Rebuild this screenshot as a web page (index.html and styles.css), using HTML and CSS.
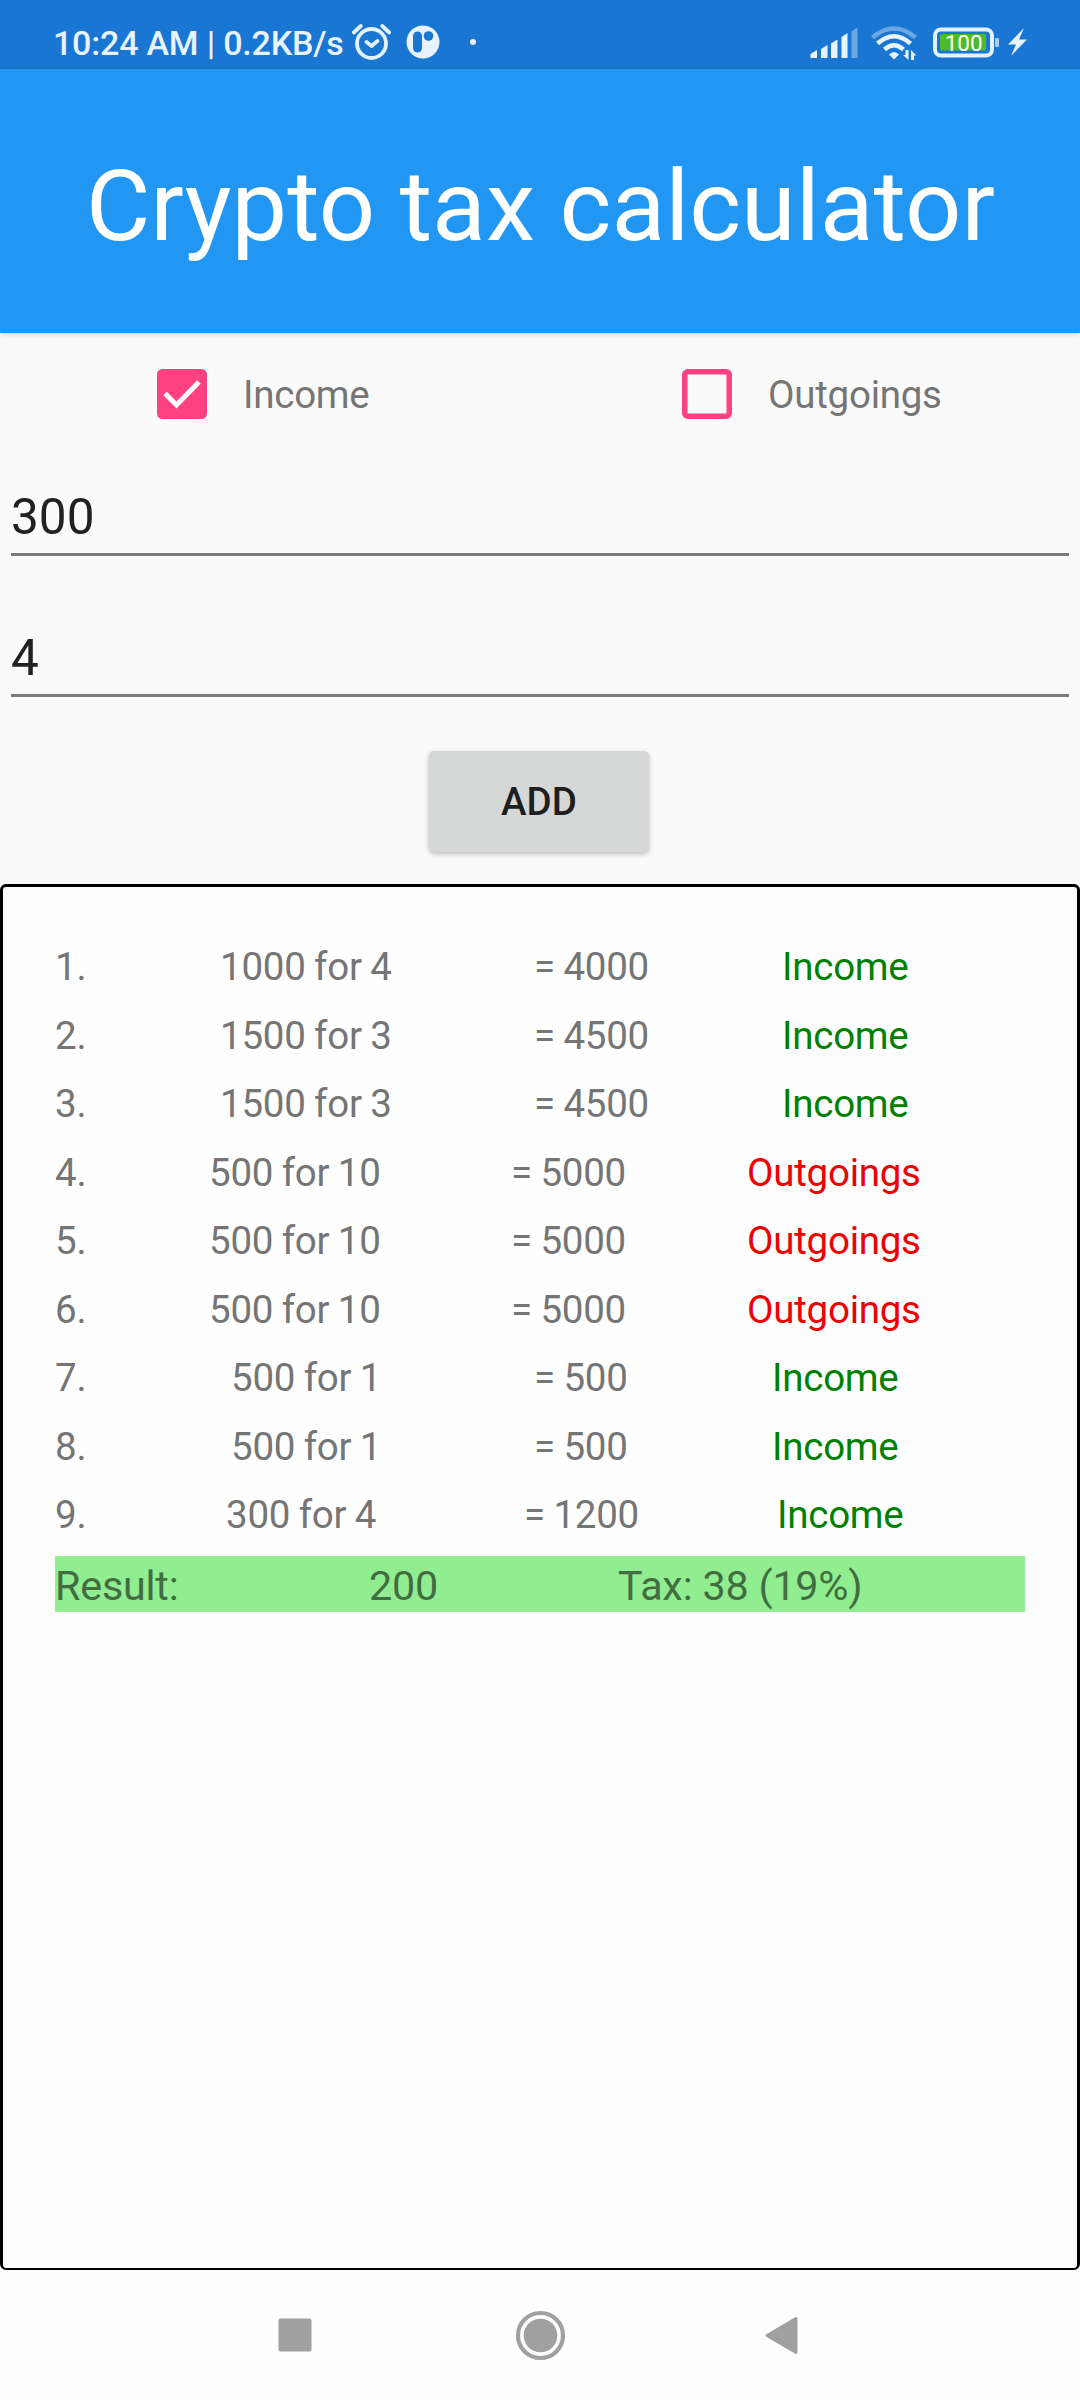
FILE: index.html
```html
<!DOCTYPE html>
<html lang="en">
<head>
<meta charset="utf-8">
<title>Crypto tax calculator</title>
<link rel="stylesheet" href="styles.css">
</head>
<body>
<div class="status">
  <span class="clock">10:24 AM | 0.2KB/s</span>
  <svg class="left-icons" width="130" height="69" viewBox="350 0 130 69">
    <g fill="none" stroke="#e3f1fd" stroke-width="3.8" stroke-linecap="round" stroke-linejoin="round">
      <circle cx="371.5" cy="43.500" r="14.500"/>
      <path d="M353.800 32.500l7-6.500M389.200 32.500l-7-6.500M366.500 42l5 4 6-5"/>
    </g>
    <circle cx="423" cy="42" r="16.500" fill="#e8f3fd"/>
    <rect x="413" y="31.500" width="9" height="21" rx="4.500" fill="#1976d2"/>
    <circle cx="428.500" cy="36" r="4.800" fill="#1976d2"/>
    <circle cx="473" cy="42" r="3" fill="#e8f3fd"/>
  </svg>
  <svg class="right-icons" width="240" height="69" viewBox="800 0 240 69">
    <g fill="#e8f3fd">
      <path d="M810.500 54l6.500-4v8h-6.500zM821 49l6.500-4v13H821zM831 43.500l6.500-4V58H831zM841.500 37l6-4v25h-6z"/>
      <path opacity=".4" d="M851.500 31.500l6-4V58h-6z"/>
      <path d="M894 59.500l-5-5q5-5 10 0z"/>
      <path d="M905.500 50h3v10l-5.500-5h2.500zM911 60h3v-4.500h2.500L911 50z"/>
    </g>
    <g fill="none" stroke="#e8f3fd" stroke-width="4.500">
      <path opacity=".4" d="M872.500 37.500q21.500-18 43 0"/>
      <path d="M877.500 43.500q16.500-14.500 33 0M884.500 49.500q9.500-8.500 19 0"/>
    </g>
    <rect x="935" y="29.500" width="57" height="26" rx="6" fill="none" stroke="#e3f1fd" stroke-width="4"/>
    <rect x="940" y="34" width="46" height="16.500" rx="2" fill="#4dbb2c"/>
    <text class="battery" x="963.700" y="51" text-anchor="middle">100</text>
    <rect x="995" y="38" width="4" height="9" rx="1" fill="#a8cdf0"/>
    <path d="M1024 28l-16 16.500h8l-5 11.500 16-16.500h-8z" fill="#e8f3fd"/>
  </svg>
</div>
<header class="header"><h1 class="title">Crypto tax calculator</h1></header>
<main class="main">
  <div class="checks">
    <label class="check"><svg width="50" height="50" viewBox="0 0 50 50"><rect width="50" height="50" rx="5.500" fill="#ff4081"/><path d="M8 24.500l11.500 11.500L42 13" fill="none" stroke="#fafafa" stroke-width="5"/></svg><span>Income</span></label>
    <label class="check"><svg width="50" height="50" viewBox="0 0 50 50"><rect x="2.750" y="2.750" width="44.500" height="44.500" rx="3" fill="none" stroke="#ff4081" stroke-width="5.500"/></svg><span>Outgoings</span></label>
  </div>
  <div class="field">300</div>
  <div class="field">4</div>
  <button class="add">ADD</button>
</main>
<section class="list">
  <div class="row a"><span>1.</span><span>1000 for 4</span><span>= 4000</span><span class="in">Income</span></div>
  <div class="row a"><span>2.</span><span>1500 for 3</span><span>= 4500</span><span class="in">Income</span></div>
  <div class="row a"><span>3.</span><span>1500 for 3</span><span>= 4500</span><span class="in">Income</span></div>
  <div class="row b"><span>4.</span><span>500 for 10</span><span>= 5000</span><span class="out">Outgoings</span></div>
  <div class="row b"><span>5.</span><span>500 for 10</span><span>= 5000</span><span class="out">Outgoings</span></div>
  <div class="row b"><span>6.</span><span>500 for 10</span><span>= 5000</span><span class="out">Outgoings</span></div>
  <div class="row c"><span>7.</span><span>500 for 1</span><span>= 500</span><span class="in">Income</span></div>
  <div class="row c"><span>8.</span><span>500 for 1</span><span>= 500</span><span class="in">Income</span></div>
  <div class="row d"><span>9.</span><span>300 for 4</span><span>= 1200</span><span class="in">Income</span></div>
  <div class="result"><span>Result:</span><span>200</span><span>Tax: 38 (19%)</span></div>
</section>
<nav class="nav">
  <svg width="1080" height="129" viewBox="0 2271 1080 129" fill="#a0a0a0">
    <rect x="278.500" y="2318.500" width="33" height="33" rx="2"/>
    <circle cx="540.500" cy="2335.500" r="16.800"/>
    <circle cx="540.500" cy="2335.500" r="22.500" fill="none" stroke="#a0a0a0" stroke-width="4.200"/>
    <path d="M767 2335.500L796 2318.500V2352.500z" stroke="#a0a0a0" stroke-width="3" stroke-linejoin="round"/>
  </svg>
</nav>
</body>
</html>
```
FILE: styles.css
```css
* { box-sizing: border-box; }
body {
  margin: 0;
  width: 1080px;
  height: 2400px;
  display: flex;
  flex-direction: column;
  background: #fefefe;
  color: #757575;
  font-family: Roboto, sans-serif;
  font-size: 38.5px;
  overflow: hidden;
}
svg { display: block; flex: none; }
.status {
  height: 69px;
  display: flex;
  background: #1976d2;
  color: #e8f3fd;
}
.clock {
  width: 297px;
  margin-left: 53px;
  padding-top: 23px;
  font-size: 34px;
  line-height: 40px;
  font-weight: 500;
  letter-spacing: -.2px;
  white-space: nowrap;
}
.right-icons { margin-left: 320px; }
.battery { font-size: 22.5px; fill: #fff; }
.header {
  height: 264px;
  background: #2196f3;
  color: #fff;
  position: relative;
  box-shadow: 0 1px 5px rgba(0, 0, 0, .2);
}
.title {
  margin: 0;
  padding: 79px 0 0 1px;
  text-align: center;
  font-size: 99px;
  line-height: 116px;
  font-weight: 400;
}
.main {
  height: 551px;
  padding: 36px 11px 0;
  background: #fafafa;
  display: flex;
  flex-direction: column;
}
.checks { display: flex; height: 49px; padding-left: 146px; }
.check {
  display: flex;
  flex: none;
  gap: 36px;
  width: 525px;
  line-height: 52px;
  letter-spacing: -.25px;
}
.check + .check { width: auto; }
.field {
  height: 138px;
  margin-bottom: 3px;
  padding-top: 70px;
  border-bottom: 3px solid #7c7c7c;
  color: #212121;
  font-size: 49.5px;
  line-height: 58px;
}
.add {
  width: 220px;
  height: 101px;
  margin: 51px 0 0 418px;
  padding: 0;
  border: 0;
  border-radius: 5px;
  background: #d6d8d7;
  box-shadow: 0 2px 5px rgba(0, 0, 0, .25);
  color: #1e1e1e;
  font: 500 38.5px/102px Roboto, sans-serif;
}
.list {
  height: 1386px;
  margin-bottom: 1px;
  padding: 57px 52px 0;
  border: 3px solid #000;
  border-bottom-width: 2px;
  border-radius: 6px;
}
.row {
  display: grid;
  height: 68.5px;
  line-height: 46px;
  letter-spacing: -.25px;
  word-spacing: -.8px;
  white-space: nowrap;
}
.a { grid-template-columns: 165px 314px 248px 1fr; }
.b { grid-template-columns: 154px 302px 236px 1fr; }
.c { grid-template-columns: 176px 303px 238px 1fr; }
.d { grid-template-columns: 171px 298px 253px 1fr; }
.in { color: #008000; }
.out { color: #ee0000; }
.result {
  display: grid;
  grid-template-columns: 314px 249px 1fr;
  height: 56px;
  margin-top: -5px;
  line-height: 60px;
  letter-spacing: -.2px;
  background: #90ee90;
  color: #426d42;
  font-size: 41.25px;
}
.nav { height: 129px; }
```
